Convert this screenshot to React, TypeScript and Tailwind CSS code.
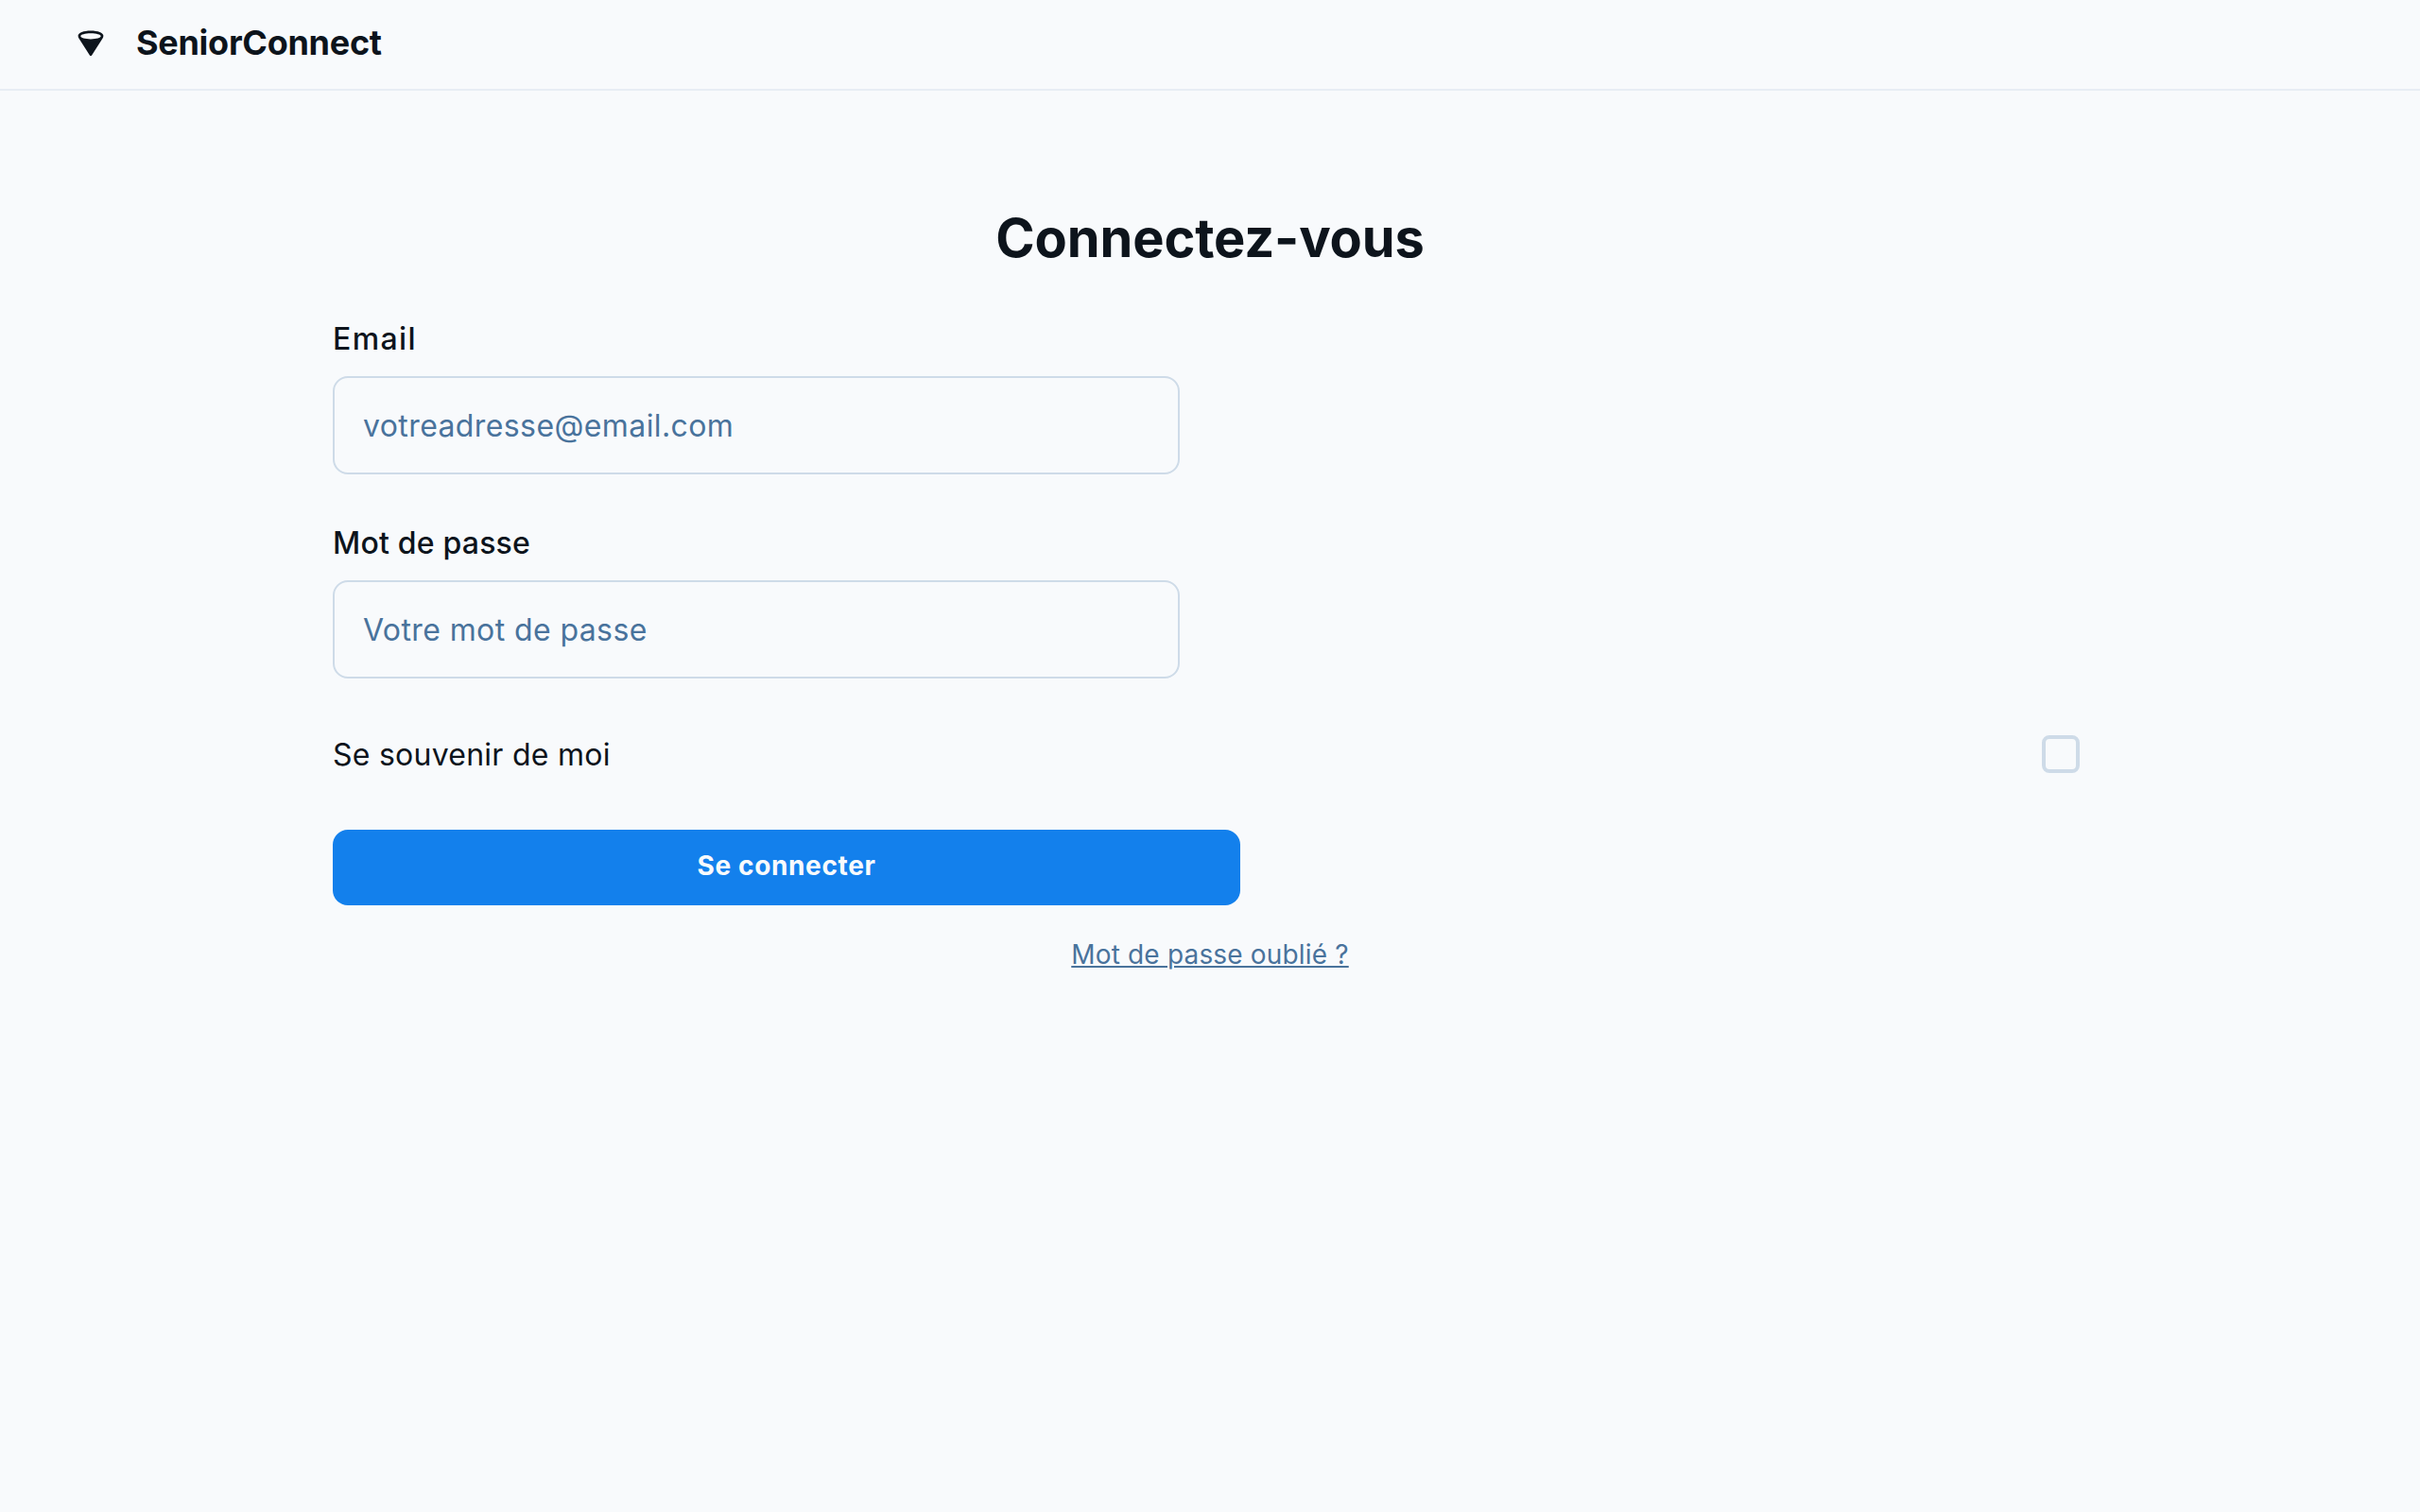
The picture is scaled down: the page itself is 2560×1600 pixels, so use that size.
function Logo() {
  return (
    <svg viewBox="0 0 32 32" className="size-8 shrink-0" aria-hidden="true">
      <path
        fillRule="evenodd"
        fill="#0d141c"
        d="M16 1.400c-7.500 0-13.400 2.200-13.400 5.300 0 1 .3 1.900.8 2.700L14.900 27.500c.5.9 1.700.9 2.200 0L28.600 9.400c.5-.8.8-1.700.8-2.700 0-3.100-5.900-5.300-13.400-5.300Zm0 9c-6 0-10.700-1.500-10.700-3.100S10 4.300 16 4.300s10.700 1.400 10.700 3-4.700 3.100-10.700 3.100Z"
      />
    </svg>
  );
}

type FieldProps = {
  label: string;
  type: string;
  placeholder: string;
  labelClass: string;
};

function Field({ label, type, placeholder, labelClass }: FieldProps) {
  return (
    <label className="flex w-[896px] flex-col">
      <span className={`mb-[15px] h-12 text-[32px] leading-12 font-medium ${labelClass}`}>{label}</span>
      <input
        type={type}
        placeholder={placeholder}
        className="h-[104px] w-full rounded-[16px] border-2 border-[#cedbe8] bg-[#f8fafc] px-[30px] text-[32px] tracking-[0.4px] text-[#0d141c] outline-none placeholder:text-[#49739c] placeholder:opacity-100"
      />
    </label>
  );
}

export default function App() {
  return (
    <div className="flex min-h-screen flex-col bg-[#f8fafc] font-['Inter',sans-serif] text-[#0d141c]">
      <header className="flex h-24 items-center gap-8 border-b-2 border-[#e7edf4] px-20">
        <Logo />
        <h2 className="pb-[5px] text-[36px] leading-[46px] font-bold tracking-[-0.27px]">SeniorConnect</h2>
      </header>
      <main className="mx-auto flex w-[1856px] flex-col pt-[121px]">
        <h1 className="text-center text-[56px] leading-[70px] font-bold tracking-[-0.14px]">Connectez-vous</h1>
        <form className="mt-12 flex flex-col" onSubmit={(e) => e.preventDefault()}>
          <div className="flex flex-col gap-[49px]">
            <Field label="Email" type="email" placeholder="votreadresse@email.com" labelClass="tracking-[1.4px]" />
            <Field label="Mot de passe" type="password" placeholder="Votre mot de passe" labelClass="tracking-[0.2px]" />
          </div>
          <label className="mt-[60px] flex h-10 items-center justify-between pr-2">
            <span className="pt-px text-[32px] leading-10 tracking-[0.25px]">Se souvenir de moi</span>
            <input
              type="checkbox"
              className="size-10 appearance-none rounded-[8px] border-4 border-[#cedbe8] bg-transparent checked:bg-[#1380ec]"
            />
          </label>
          <button
            type="submit"
            className="mt-[60px] flex h-20 w-[960px] items-center justify-center rounded-[16px] bg-[#1380ec] pb-[4px] text-[28px] font-bold tracking-[0.65px] text-[#f8fafc]"
          >
            Se connecter
          </button>
        </form>
        <a
          href="#"
          className="mt-[31px] self-center text-[28px] leading-[42px] tracking-[0.17px] text-[#49739c] underline decoration-2 underline-offset-[2px]"
        >
          Mot de passe oublié ?
        </a>
      </main>
    </div>
  );
}
